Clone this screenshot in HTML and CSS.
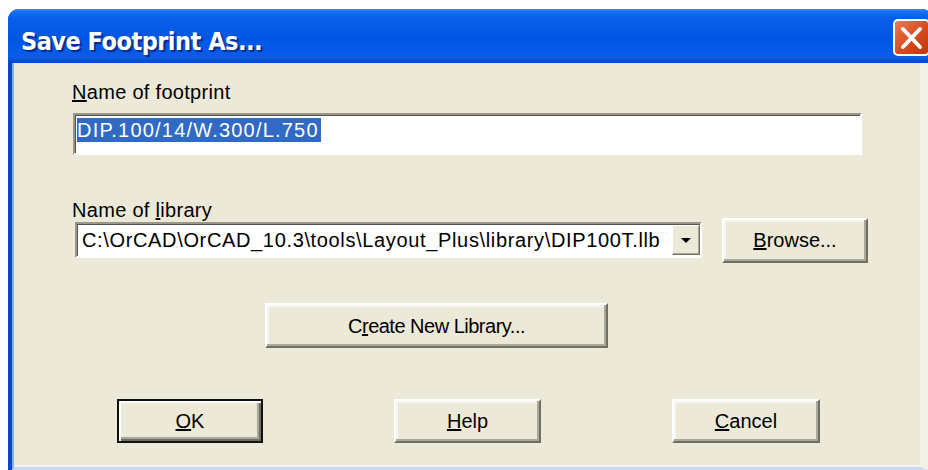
FILE: index.html
```html
<!DOCTYPE html>
<html lang="en">
<head>
<meta charset="utf-8">
<title>Save Footprint As...</title>
<link rel="stylesheet" href="styles.css">
</head>
<body>
<div class="window">
  <div class="titlebar">
    <span class="title">Save Footprint As...</span>
    <button class="close" aria-label="Close">
      <svg viewBox="0 0 33 33" width="33" height="33">
        <path d="M8 8L25 26M25 8L8 26" stroke="#fff" stroke-width="4" stroke-linecap="round"/>
      </svg>
    </button>
  </div>
  <div class="client">
    <div class="field-group">
      <label class="label"><u>N</u>ame of footprint</label>
      <div class="textbox"><span class="selected">DIP.100/14/W.300/L.750</span></div>
    </div>
    <div class="library-group">
      <label class="label lib-label">Name of <u>l</u>ibrary</label>
      <div class="combo">
        <span class="combo-text">C:\OrCAD\OrCAD_10.3\tools\Layout_Plus\library\DIP100T.llb</span>
        <span class="combo-arrow">
          <svg viewBox="0 0 10 5" width="10" height="5"><polygon points="0,0 10,0 5,5" fill="#000"/></svg>
        </span>
      </div>
      <button class="btn browse"><u>B</u>rowse...</button>
    </div>
    <button class="btn create">C<u>r</u>eate New Library...</button>
    <div class="actions">
      <button class="btn btn-default ok"><u>O</u>K</button>
      <button class="btn help"><u>H</u>elp</button>
      <button class="btn cancel"><u>C</u>ancel</button>
    </div>
  </div>
</div>
</body>
</html>
```

FILE: styles.css
```css
html, body {
  margin: 0;
  height: 100%;
}

body {
  background: #fff;
  overflow: hidden;
  font-family: "Liberation Sans", Arial, sans-serif;
  font-size: 20px;
  color: #000;
}

/* dialog frame */
.window {
  margin: 9px 0 0 8px;
  width: 925px;
  height: 461px;
  display: flex;
  flex-direction: column;
  border-radius: 11px 11px 0 0;
  overflow: hidden;
  background: #0a46d4;
}

.titlebar {
  flex: none;
  height: 54px;
  display: flex;
  align-items: flex-start;
  background: linear-gradient(180deg, #3b8cf8 0, #1a6ef4 5%, #0a5ee9 16%, #0057e5 55%, #0a5ceb 88%, #0046cf 100%);
}

.title {
  margin: 18px 0 0 13px;
  line-height: 29px;
  color: #fff;
  font-family: "DejaVu Sans Condensed", "DejaVu Sans", sans-serif;
  font-stretch: condensed;
  font-weight: bold;
  font-size: 25px;
  letter-spacing: -0.5px;
  text-shadow: 2px 2px 1px #0a2a8c;
}

.close {
  margin: 10px 3px 0 auto;
  width: 37px;
  height: 37px;
  box-sizing: border-box;
  padding: 0;
  border: 2px solid #fff;
  border-radius: 5px;
  background: linear-gradient(135deg, #ec7a52 0, #d84a1c 55%, #bd3a10 100%);
  display: flex;
  align-items: center;
  justify-content: center;
}

.close svg {
  display: block;
}

/* client area */
.client {
  flex: 1;
  margin: 0 5px 0 4px;
  border-left: 2px solid #86adf0;
  border-right: 8px solid #f3f1e7;
  border-bottom: 3px solid #cbdaf3;
  box-shadow: inset 0 -2px 0 #f5f3e9;
  background: #ece9d8;
  padding: 17px 0 0 58px;
  display: flex;
  flex-direction: column;
  align-items: flex-start;
}

.label {
  display: block;
  line-height: 24px;
  letter-spacing: 0.3px;
}

.field-group {
  display: flex;
  flex-direction: column;
  gap: 9px;
}

.textbox {
  box-sizing: border-box;
  margin-left: 1px;
  width: 789px;
  height: 42px;
  padding: 3px 0 0 2px;
  background: #fff;
  border: 2px solid;
  border-color: #9a978a #fff #fff #9a978a;
  box-shadow: inset 1px 1px 0 #55534b;
}

.selected {
  display: inline-block;
  line-height: 24px;
  background: #316ac5;
  color: #fff;
  letter-spacing: 1.2px;
  padding-right: 2px;
}

.library-group {
  margin-top: 43px;
  display: grid;
  grid-template-columns: 630px 146px;
  grid-template-rows: 24px 36px;
  column-gap: 20px;
}

.lib-label {
  grid-column: 1;
  grid-row: 1;
}

.combo {
  grid-column: 1;
  grid-row: 2;
  margin-left: 3px;
  box-sizing: border-box;
  height: 36px;
  display: flex;
  align-items: center;
  background: #fff;
  border: 2px solid;
  border-color: #9a978a #fff #fff #9a978a;
  box-shadow: inset 1px 1px 0 #55534b;
}

.combo-text {
  flex: 1;
  padding-left: 5px;
  white-space: nowrap;
  overflow: hidden;
  letter-spacing: 0.65px;
}

.combo-arrow {
  flex: none;
  box-sizing: border-box;
  width: 28px;
  height: 30px;
  display: flex;
  align-items: center;
  justify-content: center;
  background: #ece9d8;
  border: 1px solid;
  border-color: #fff #716f64 #716f64 #fff;
  box-shadow: inset -1px -1px 0 #aca899;
}

.combo-arrow svg {
  display: block;
}

/* push buttons */
.btn {
  box-sizing: border-box;
  font: inherit;
  color: #000;
  background: #ece9d8;
  padding: 0;
  line-height: 1;
  border: 2px solid;
  border-color: #fff #716f64 #716f64 #fff;
  box-shadow: inset -2px -2px 0 #aca899, inset 2px 2px 0 #f6f5ef;
}

.btn-default {
  border: 2px solid #111;
  box-shadow: inset 2px 2px 0 #fff, inset -2px -2px 0 #716f64, inset -4px -4px 0 #aca899;
}

.browse {
  grid-column: 2;
  grid-row: 2;
  align-self: center;
  width: 146px;
  height: 45px;
}

.create {
  margin: 45px 0 0 193px;
  width: 343px;
  height: 45px;
  letter-spacing: -0.5px;
}

.actions {
  margin: 51px 0 0 45px;
  display: flex;
  gap: 131px;
}

.ok {
  width: 146px;
  height: 44px;
}

.help {
  width: 147px;
  height: 44px;
}

.cancel {
  width: 148px;
  height: 44px;
}
```
